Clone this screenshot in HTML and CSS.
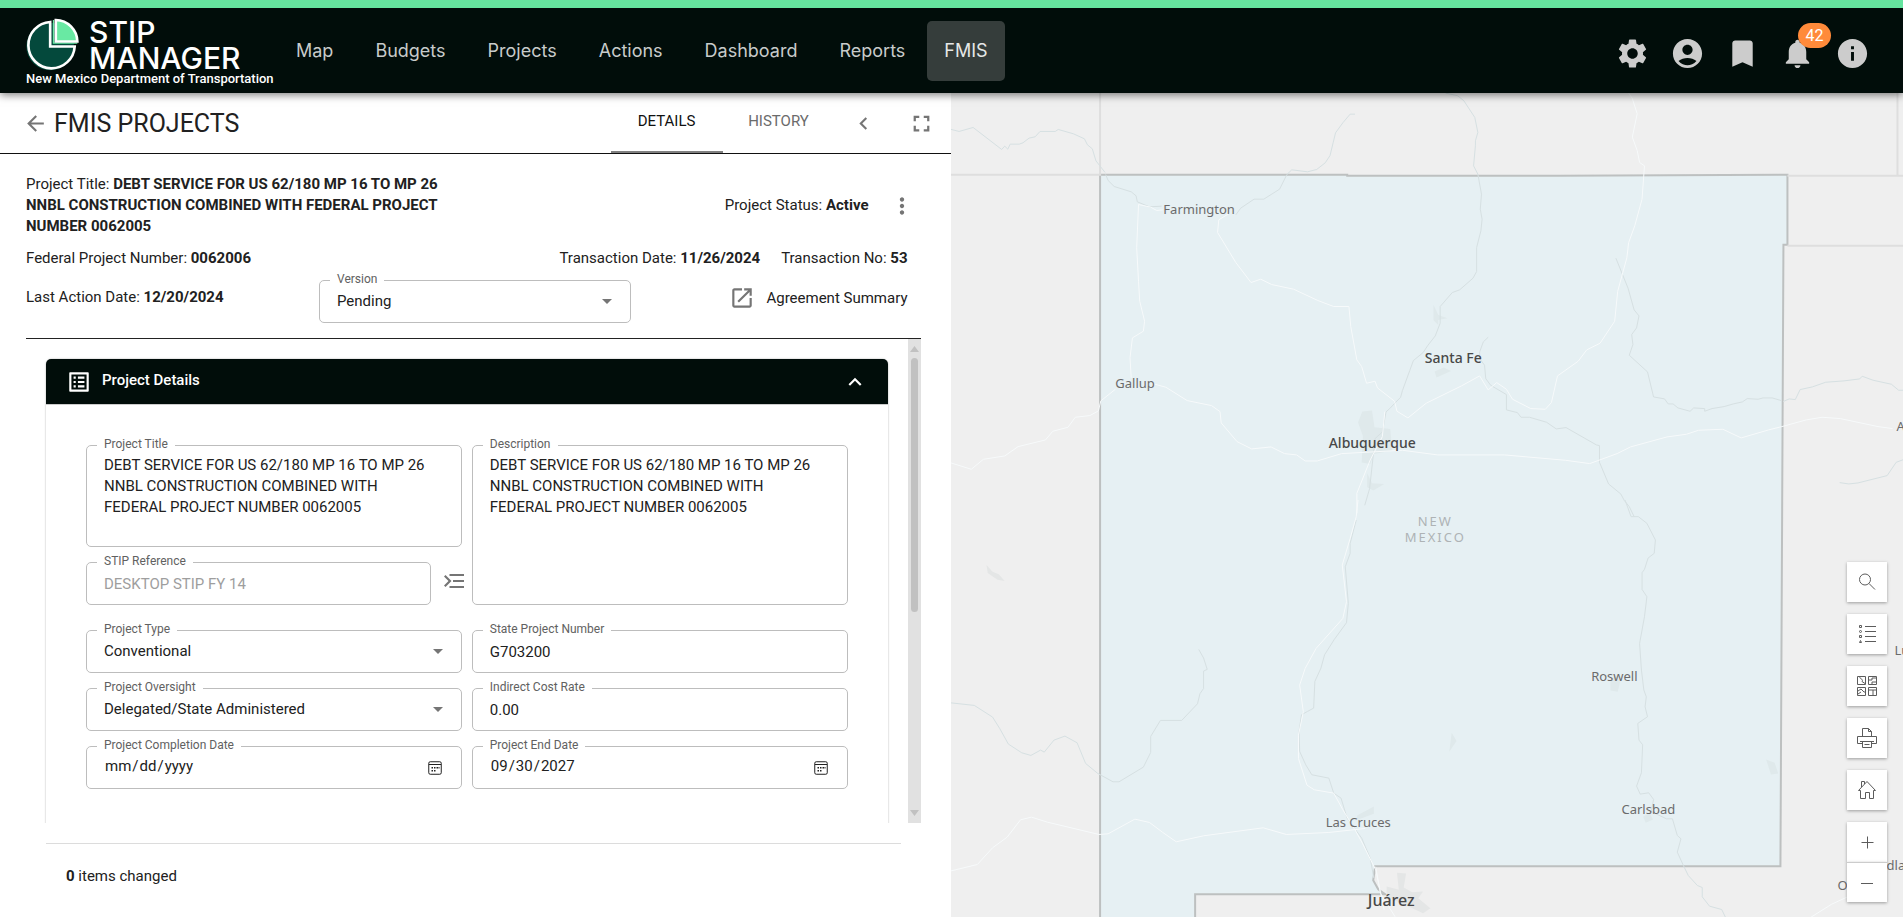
FILE: index.html
```html
<!DOCTYPE html>
<html lang="en">
<head>
<meta charset="utf-8">
<title>STIP Manager - FMIS Projects</title>
<link rel="stylesheet" href="styles.css">
</head>
<body>
<div class="app">
  <header class="topbar">
    <a class="brand" href="#">
      <span class="brand-main">
        <svg class="brand-logo" viewBox="77 54 160 160" aria-hidden="true">
          <circle cx="150" cy="140" r="72" fill="#04493c"/>
          <path d="M150 66A70 70 0 1 0 224 140H150Z" fill="#04493c" stroke="#fff" stroke-width="8"/>
          <path d="M160 60V130H232" fill="none" stroke="#69e9a3" stroke-width="4"/>
          <path d="M167 60V125H232A66 66 0 0 0 167 60Z" fill="#69e9a3" stroke="#fff" stroke-width="8"/>
        </svg>
        <span class="brand-name">STIP<br>MANAGER</span>
      </span>
      <span class="brand-sub">New Mexico Department of Transportation</span>
    </a>
    <nav class="nav">
      <a class="nav-link" href="#">Map</a>
      <a class="nav-link" href="#">Budgets</a>
      <a class="nav-link" href="#">Projects</a>
      <a class="nav-link" href="#">Actions</a>
      <a class="nav-link" href="#">Dashboard</a>
      <a class="nav-link" href="#">Reports</a>
      <a class="nav-link nav-link-active" href="#">FMIS</a>
    </nav>
    <div class="tools">
      <button class="tool" aria-label="Settings"><svg viewBox="0 0 24 24"><path d="M19.14 12.94c.04-.3.06-.61.06-.94 0-.32-.02-.64-.07-.94l2.03-1.58c.18-.14.23-.41.12-.61l-1.92-3.32c-.12-.22-.37-.29-.59-.22l-2.39.96c-.5-.38-1.03-.7-1.62-.94l-.36-2.54c-.04-.24-.24-.41-.48-.41h-3.84c-.24 0-.43.17-.47.41l-.36 2.54c-.59.24-1.13.57-1.62.94l-2.39-.96c-.22-.08-.47 0-.59.22L2.74 8.87c-.12.21-.08.47.12.61l2.03 1.58c-.05.3-.09.63-.09.94s.02.64.07.94l-2.03 1.58c-.18.14-.23.41-.12.61l1.92 3.32c.12.22.37.29.59.22l2.39-.96c.5.38 1.03.7 1.62.94l.36 2.54c.05.24.24.41.48.41h3.84c.24 0 .44-.17.47-.41l.36-2.54c.59-.24 1.13-.56 1.62-.94l2.39.96c.22.08.47 0 .59-.22l1.92-3.32c.12-.22.07-.47-.12-.61l-2.01-1.58zM12 15.6c-1.98 0-3.6-1.62-3.6-3.6s1.62-3.6 3.6-3.6 3.6 1.62 3.6 3.6-1.62 3.6-3.6 3.6z"/></svg></button>
      <button class="tool" aria-label="Account"><svg viewBox="0 0 24 24"><path d="M12 2C6.48 2 2 6.48 2 12s4.48 10 10 10 10-4.480 10-10S17.520 2 12 2zm0 4c1.930 0 3.500 1.570 3.500 3.500S13.930 13 12 13s-3.500-1.570-3.500-3.500S10.070 6 12 6zm0 14c-2.030 0-4.430-.82-6.140-2.880C7.550 15.800 9.680 15 12 15s4.450.8 6.140 2.120C16.430 19.180 14.030 20 12 20z"/></svg></button>
      <button class="tool" aria-label="Bookmarks"><svg viewBox="0 0 24 24"><path d="M17 3H7c-1.100 0-1.990.9-1.990 2L5 21l7-3 7 3V5c0-1.100-.9-2-2-2z"/></svg></button>
      <button class="tool" aria-label="Notifications"><svg viewBox="0 0 24 24"><path d="M12 22c1.100 0 2-.9 2-2h-4c0 1.100.89 2 2 2zm6-6v-5c0-3.070-1.640-5.640-4.500-6.320V4c0-.83-.67-1.500-1.500-1.500s-1.500.67-1.500 1.500v.68C7.630 5.360 6 7.920 6 11v5l-2 2v1h16v-1l-2-2z"/></svg><span class="badge">42</span></button>
      <button class="tool" aria-label="Information"><svg viewBox="0 0 24 24"><path d="M12 2C6.480 2 2 6.480 2 12s4.480 10 10 10 10-4.480 10-10S17.520 2 12 2zm1 15h-2v-6h2v6zm0-8h-2V7h2v2z"/></svg></button>
    </div>
  </header>

  <div class="content">
    <main class="panel">
      <div class="panel-head">
        <button class="icon-btn back" aria-label="Back"><svg viewBox="0 0 24 24"><path d="M20 11H7.830l5.590-5.590L12 4l-8 8 8 8 1.410-1.410L7.830 13H20v-2z"/></svg></button>
        <h1 class="title">FMIS PROJECTS</h1>
        <div class="tabs" role="tablist">
          <button class="tab tab-active" role="tab" aria-selected="true">DETAILS</button>
          <button class="tab" role="tab" aria-selected="false">HISTORY</button>
        </div>
        <button class="icon-btn" aria-label="Collapse"><svg viewBox="0 0 24 24"><path d="M15.410 7.410L14 6l-6 6 6 6 1.410-1.410L10.830 12z"/></svg></button>
        <button class="icon-btn" aria-label="Full screen"><svg class="icon-large" viewBox="0 0 24 24"><path d="M5 5h5v2H7v3H5V5m9 0h5v5h-2V7h-3V5m3 9h2v5h-5v-2h3v-3m-7 3v2H5v-5h2v3h3z"/></svg></button>
      </div>

      <section class="summary">
        <div class="summary-row">
          <p class="project-title">Project Title: <b>DEBT SERVICE FOR US 62/180 MP 16 TO MP 26 NNBL CONSTRUCTION COMBINED WITH FEDERAL PROJECT NUMBER 0062005</b></p>
          <div class="status">
            <p>Project Status: <b>Active</b></p>
            <button class="more" aria-label="More actions"><svg viewBox="0 0 24 24"><path d="M12 8c1.100 0 2-.9 2-2s-.9-2-2-2-2 .9-2 2 .9 2 2 2zm0 2c-1.100 0-2 .9-2 2s.9 2 2 2 2-.9 2-2-.9-2-2-2zm0 6c-1.100 0-2 .9-2 2s.9 2 2 2 2-.9 2-2-.9-2-2-2z"/></svg></button>
          </div>
        </div>
        <div class="summary-row">
          <p>Federal Project Number: <b>0062006</b></p>
          <div class="transactions">
            <p>Transaction Date: <b>11/26/2024</b></p>
            <p>Transaction No: <b>53</b></p>
          </div>
        </div>
        <div class="summary-row summary-last">
          <p class="last-action">Last Action Date: <b>12/20/2024</b></p>
          <div class="field version">
            <label for="version">Version</label>
            <select id="version"><option>Pending</option></select>
            <svg class="caret" viewBox="0 0 10 5"><path d="M0 0h10L5 5z"/></svg>
          </div>
          <a class="agreement" href="#"><svg viewBox="0 0 24 24"><path d="M19 19H5V5h7V3H5c-1.110 0-2 .9-2 2v14c0 1.100.89 2 2 2h14c1.100 0 2-.9 2-2v-7h-2v7zM14 3v2h3.590l-9.830 9.830 1.410 1.410L19 6.410V10h2V3h-7z"/></svg>Agreement Summary</a>
        </div>
      </section>

      <div class="scroll-area">
        <section class="card">
          <button class="card-head" aria-expanded="true">
            <svg class="card-icon" viewBox="0 0 24 24"><path d="M19 5v14H5V5h14m1.100-2H3.900c-.5 0-.9.400-.9.900v16.200c0 .4.400.9.900.9h16.200c.4 0 .9-.5.900-.9V3.900c0-.5-.5-.9-.9-.9zM11 7h6v2h-6V7zm0 4h6v2h-6v-2zm0 4h6v2h-6zM7 7h2v2H7zm0 4h2v2H7zm0 4h2v2H7z"/></svg>
            <span>Project Details</span>
            <svg class="card-chevron" viewBox="0 0 24 24"><path d="M12 8l-6 6 1.410 1.410L12 10.830l4.590 4.580L18 14z"/></svg>
          </button>
          <form class="form">
            <div class="form-top">
              <div class="form-stack">
                <div class="field field-tall">
                  <label for="ptitle">Project Title</label>
                  <textarea id="ptitle">DEBT SERVICE FOR US 62/180 MP 16 TO MP 26 NNBL CONSTRUCTION COMBINED WITH FEDERAL PROJECT NUMBER 0062005</textarea>
                </div>
                <div class="stip-row">
                  <div class="field">
                    <label for="stip">STIP Reference</label>
                    <input id="stip" type="text" value="DESKTOP STIP FY 14" disabled>
                  </div>
                  <button class="stip-btn" type="button" aria-label="Choose STIP reference"><svg viewBox="0 0 20 14"><path d="M0 2.500 1.500 1l6 6-6 6L0 11.500 4.500 7zM5.500 0H20v2H5.500zM9 6h11v2H9zM5.500 12H20v2H5.500z"/></svg></button>
                </div>
              </div>
              <div class="field field-fill">
                <label for="desc">Description</label>
                <textarea id="desc">DEBT SERVICE FOR US 62/180 MP 16 TO MP 26 NNBL CONSTRUCTION COMBINED WITH FEDERAL PROJECT NUMBER 0062005</textarea>
              </div>
            </div>
            <div class="form-grid">
              <div class="field">
                <label for="ptype">Project Type</label>
                <select id="ptype"><option>Conventional</option></select>
                <svg class="caret" viewBox="0 0 10 5"><path d="M0 0h10L5 5z"/></svg>
              </div>
              <div class="field">
                <label for="spn">State Project Number</label>
                <input id="spn" type="text" value="G703200">
              </div>
              <div class="field">
                <label for="oversight">Project Oversight</label>
                <select id="oversight"><option>Delegated/State Administered</option></select>
                <svg class="caret" viewBox="0 0 10 5"><path d="M0 0h10L5 5z"/></svg>
              </div>
              <div class="field">
                <label for="icr">Indirect Cost Rate</label>
                <input id="icr" type="text" value="0.00">
              </div>
              <div class="field">
                <label for="pcd">Project Completion Date</label>
                <input id="pcd" type="date">
                <svg class="calendar" viewBox="0 0 14 14"><rect x=".75" y=".75" width="12.500" height="12.500" rx="1.500"/><path d="M1 3.500h12"/><path class="dots" d="M6 6h1.500v1.500H6zM8.500 6H10v1.500H8.500zM3.500 6H5v1.500H3.500zM3.500 9H5v1.500H3.500zM6 9h1.500v1.500H6zM10.500 6h1v1.500h-1z"/></svg>
              </div>
              <div class="field">
                <label for="ped">Project End Date</label>
                <input id="ped" type="date" value="2027-09-30">
                <svg class="calendar" viewBox="0 0 14 14"><rect x=".75" y=".75" width="12.500" height="12.500" rx="1.500"/><path d="M1 3.500h12"/><path class="dots" d="M6 6h1.500v1.500H6zM8.500 6H10v1.500H8.500zM3.500 6H5v1.500H3.500zM3.500 9H5v1.500H3.500zM6 9h1.500v1.500H6zM10.500 6h1v1.500h-1z"/></svg>
              </div>
            </div>
          </form>
        </section>
        <div class="scrollbar" aria-hidden="true">
          <svg viewBox="0 0 9 6"><path d="M4.500 0 9 6H0z"/></svg>
          <div class="scroll-track"><div class="scroll-thumb"></div></div>
          <svg viewBox="0 0 9 6"><path d="M0 0h9L4.500 6z"/></svg>
        </div>
      </div>

      <footer class="panel-foot"><b>0</b> items changed</footer>
    </main>

    <section class="map" aria-label="Map">
      <svg class="map-canvas" viewBox="951 93 952 824" preserveAspectRatio="xMidYMid slice">
        <path class="state" d="M1100 175H1347V176H1558L1787 175V245H1783L1780 866H1375L1373 880 1378 889 1385 894H1195V925H1100Z"/>
        <path class="outer" d="M951 175H1100V93M1787 176H1903M1787 246H1903M1897 93V175"/>
        <g transform="translate(950 90) scale(.6078 .3333)">
          <path class="urban" d="M678 965l16-3 4 50 26 5 3 65-30 10-6 30-14-4 2-80-8-40zM686 1150l8 30 20 2-18 20-10-10zM797 845l15-12 12 10-24 20zM795 645l8 30 15 10-15 5v15l-8-15z"/>
          <path class="river" d="M0 118l15 7 23-12 47 66 5-10 5 9 4-15h15l6-4 10-14 10-4 8-16h25l5-6 25 13 18 15 5 18 8 12 6 36 15 35M256 254l4 18 10 18 28 16 8 12 2 18 20 15 20-2M470 375l8-20 22-27h16l26-30 12-44 8-14 26 6 15-7 14-20 8-22 5-38 4-30 12-30 12-26h8M815 10l20 8 10 15 18 50 5 45-4 25v15l-3 60 7 25 6 60-2 45 3 30-2 35-7 50v72l-6 20-22 35-12 8-20 42v50l-8 38-12 28-8 22-16 24-6 30-12 60-3 20-18 34-6 10-6 60-12 20-3 50-6 100-8 50M1095 505l20 90 10 65 8 18-4 36-8 20 2 30-6 32 30 50 10 75 18 6 6 15h8l8 12 20 10 6-10 18 2v8l12-8 20-6 15-8 15-6 8-10 18 2 8-4h15l15 8M1370 935l10-8 10 2 8-30 20-8 22-14 30-4 26-6 4-8 18 12 30 12 12 18h14M885 742l-8 14-6 30v20l8 20 2 40 8 20 26 28v46l18 8 6 14h14l28 15 16 20 16-4 50 52 5 2v50l15 65 20 30 6 20 8 18 8 30M1463 1178l15 4 15-3 48-22 15-40 12-8"/>
          <path class="road" d="M0 1118l35 20 20-30 35-10 22-28 45-20 12-26 25-12 12-30 24-5 14-14 4-30 24-35M335 882l20 10 35 40 40 15 14 18 2 34 26 56 24 22 32-6 22 20 20 4 14 18h20l40-22 100-10 58 14h110l100 16 40 10 45-30 22-20 60-30 32-8 20-12 40-3 30 26 45-24 22-10 40-20 26-8 30 4 62 24 24 6M350 360l-10 2-10-10-20-8-3 130 3 100 2 60 8 60-2 30-18 20-4 60 2 60M460 370l-18 20-2 38 30 90 25 60 16-10 18 16 36 14 40 34 26 18h25l3 60 10 100 8 20 8 50 14-6 4 20 28 40 4 30 18 20 30-44 58-52 30-30 14 42 14-22 16 20 10 30 30 28 24 2 10-20 10-80 34-44 14-34 22-20 24-66 5-90 15-100 3-46 10-50 12-80 4-100-8-10-4-36-8-40 8-70-8-46-26-70-6-30M715 965l-4 75-20 70-22 100v60"/>
        </g>
        <g transform="translate(950 500) scale(.6078 .3333)">
          <path class="urban urban-out" d="M60 195l10 20 10 8 10 20-12-4-16-20zM735 1118l15 2-4 42 14 14 18-2-8 20 20 30-12 15-60-50v-30l20 10z"/>
          <path class="urban" d="M825 698l8 25-12 32zM1086 545l8-20 8 20-4 30-12-4zM1342 778l14 10 6 32-12 3zM670 945l27-26v22l-30 20zM1140 950l10-12 6 20-12 10z"/>
          <path class="river" d="M0 608l40 8 30 35 12 35 14 46 22 26 15 8 16-16 6 6 16-36 18-12 20 20 14 62 20 30 25 25h10l40-44 12-44v-48l16-48h35l26-50 4-30 6-16v-52l6-5-6-34-8-26M668 60l-10 70v30l-8 40 5 110-3 58-20 50-16 46-6 40-10 40-2 80-10 10-10 10-4 50 1 60 10 40 10 30 28 10 8 45 12 15 10 60 24 60 14 60 6 60M1110 0l10 50h12l14 20 14 50-2 40-10 14-6 34-4 10v50l8 22-4 60-8 80 3 80 4 60 4 20-2 30 4 30-16 20 2 50 6 14-2 84-8 40 6 24 14-4 8 20-4 36 25 22h10l8 50 6 10-6 40 10 40 8 30 15 30 8 6v28l12 28 20 10 8 30 12 20"/>
          <path class="road" d="M671 0l-3 50-10 65-13 80 7 110-6 50-44 90-18 60-9 50 6 80-8 70v70l14 80 12 14 32 10 15 50 20 60 12 40 22 80 14 120M0 1113l45-20 25-50 24-32 22-52 18-8 26 15 85 37 15-2 44-44 24 10 22 30 22 28 45-18 98-24 38 20 70-6 60-12M700 1100l8 80 24 70M1415 1252l35-40 26-22"/>
        </g>
        <text class="town" x="1199" y="214">Farmington</text>
        <text class="town" x="1135" y="388">Gallup</text>
        <text class="city" x="1453" y="363">Santa Fe</text>
        <text class="city" x="1372" y="448">Albuquerque</text>
        <text class="region" x="1435" y="526">NEW</text>
        <text class="region" x="1435" y="542">MEXICO</text>
        <text class="town" x="1614" y="681">Roswell</text>
        <text class="town" x="1648" y="814">Carlsbad</text>
        <text class="town" x="1358" y="827">Las Cruces</text>
        <text class="city city-large" x="1391" y="906">Juárez</text>
        <text class="town edge" x="1896" y="431">Amarillo</text>
        <text class="town edge" x="1894" y="655">Lubbock</text>
        <text class="town edge" x="1871" y="870">Midland</text>
        <text class="town edge" x="1837" y="890">Odessa</text>
      </svg>
      <div class="map-tools">
        <button class="map-btn" aria-label="Search"><svg viewBox="0 0 20 20"><circle cx="8" cy="7.500" r="5.500"/><path d="M12 11.500l6 6"/></svg></button>
        <button class="map-btn" aria-label="Legend"><svg viewBox="0 0 20 20"><path d="M8 2.500h11M8 7.500h11M8 12.500h11M8 17.500h11M2.500 1.500h2v2h-2zM2.500 11.500h2v2h-2zM3.500 16.500l1 2h-2z"/><circle cx="3.500" cy="7.500" r="1"/></svg></button>
        <button class="map-btn" aria-label="Basemap gallery"><svg viewBox="0 0 20 20"><path d="M.5.500h8v8h-8zM11.500.500h8v8h-8zM.5 11.500h8v8h-8zM11.500 11.500h8v8h-8zM3 .5c-1 3 4 2 2 5l3 2M12 4h3V2h4M15 8V6h4M1 15l3-2 3 3 2 0M1 18l3-2M12 14h7M16 14v5"/></svg></button>
        <button class="map-btn" aria-label="Print"><svg viewBox="0 0 20 20"><path d="M5.500 8.500v-8h6l3 3v5M11.500.500v3h3M5.500 15.500h-5v-7h19v7h-5M3 13.500h14M5.500 13.500v6h9v-6M7.500 16.500h5"/></svg></button>
        <button class="map-btn" aria-label="Default view"><svg viewBox="0 0 20 20"><path d="M1.500 10.500L10 1.500l8.500 9h-2v8h-4v-6h-4v6h-5v-8zM4.500 7V1.500h3V4"/></svg></button>
        <div class="zoom-group">
          <button class="map-btn" aria-label="Zoom in"><svg viewBox="0 0 20 20"><path d="M4.500 10.500h12M10.500 4.500v12"/></svg></button>
          <button class="map-btn" aria-label="Zoom out"><svg viewBox="0 0 20 20"><path d="M4 10.500h12"/></svg></button>
        </div>
      </div>
    </section>
  </div>
</div>
</body>
</html>
```

FILE: styles.css
```css
* { box-sizing: border-box; }

body {
  margin: 0;
  font-family: Roboto, "Liberation Sans", sans-serif;
  font-size: 15px;
  line-height: 21px;
  color: #212121;
  background: #fff;
}

button, input, select, textarea { font: inherit; color: inherit; }
button { padding: 0; border: 0; background: none; cursor: pointer; }
a { color: inherit; text-decoration: none; }
p, h1 { margin: 0; }
b { font-weight: 700; }
svg { display: block; }

.app { display: flex; flex-direction: column; height: 100vh; }

/* Top bar */
.topbar {
  position: relative;
  z-index: 2;
  display: flex;
  align-items: center;
  padding: 0 23px 0 26px;
  height: 93px;
  flex: none;
  border-top: 8px solid #65e49f;
  background: #010d0a;
  box-shadow: 0 2px 8px rgba(0, 0, 0, .5);
  color: #fff;
}
.brand { display: flex; flex-direction: column; width: 250px; padding-top: 4px; }
.brand-main { display: flex; gap: 10px; }
.brand-logo { width: 53px; height: 53px; }
.brand-name { padding-top: 1px; font: 500 30px/26px Inter, sans-serif; }
.brand-sub { font-size: 13px; line-height: 16px; font-weight: 500; white-space: nowrap; }
.nav { display: flex; gap: 2px; }
.nav-link {
  display: flex;
  align-items: center;
  height: 60px;
  padding: 0 20px;
  border-radius: 5px;
  font: 400 18px/24px Inter, sans-serif;
  color: #c8cbca;
}
.nav-link-active { padding: 0 17px; background: #353d3b; color: #e6e8e7; }
.tools { display: flex; margin-left: auto; padding-top: 5px; }
.tool { position: relative; display: grid; place-items: center; width: 55px; height: 55px; }
.tool svg { width: 35px; height: 35px; fill: #ccc; }
.badge {
  position: absolute;
  top: -3px;
  left: 28px;
  min-width: 33px;
  border-radius: 13px;
  background: #ff8a3a;
  color: #fff;
  font-size: 16px;
  line-height: 25px;
}

/* Page */
.content { display: flex; flex: 1; min-height: 0; }
.panel { display: flex; flex-direction: column; flex: 0 0 calc(50% - 1px); min-width: 0; }
.panel-head {
  display: flex;
  align-items: center;
  height: 61px;
  flex: none;
  padding: 0 0 0 23px;
  border-bottom: 1px solid #111;
}
.icon-btn { display: grid; place-items: center; width: 58px; height: 58px; }
.icon-btn svg { width: 25px; height: 25px; fill: #757575; }
.icon-btn .icon-large { width: 27px; height: 27px; }
.back { width: 25px; }
.title { margin-left: 6px; padding-top: 2px; font-size: 25px; line-height: 30px; font-weight: 400; }
.tabs { display: flex; margin-left: auto; align-self: stretch; }
.tab { width: 112px; padding-bottom: 2px; border-bottom: 2px solid transparent; color: #6b6b6b; }
.tab-active { border-bottom-color: #808080; color: #111; }

/* Project summary */
.summary {
  display: flex;
  flex-direction: column;
  margin: 0 30px 0 26px;
  padding: 20px 13px 15px 0;
  border-bottom: 1px solid #222;
}
.summary-row { display: flex; align-items: center; justify-content: space-between; gap: 16px; }
.project-title { width: 48%; }
.status { display: flex; align-items: center; gap: 20px; }
.more svg { width: 26px; height: 26px; margin-right: -7px; fill: #757575; }
.transactions { display: flex; gap: 21px; }
.summary-row + .summary-row { margin-top: 11px; }
.summary-row.summary-last { align-items: flex-start; }
.last-action { flex: none; width: 277px; padding-top: 7px; }
.version { flex: none; width: 312px; }
.version select { padding-bottom: 2px; }
.agreement { display: flex; align-items: center; gap: 11px; margin-left: auto; padding-top: 5px; }
.agreement svg { width: 26px; height: 26px; fill: #757575; }

/* Outlined fields */
.field {
  position: relative;
  display: flex;
  align-items: center;
  height: 43px;
  border: 1px solid #bdbdbd;
  border-radius: 5px;
  background: #fff;
}
.field label {
  position: absolute;
  top: -10px;
  left: 10px;
  padding: 0 7px;
  background: #fff;
  color: #616161;
  font-size: 12px;
  line-height: 16px;
}
.field input, .field select, .field textarea {
  flex: 1;
  min-width: 0;
  height: 100%;
  margin: 0;
  padding: 0 17px;
  border: 0;
  outline: 0;
  background: none;
  appearance: none;
}
.field input:disabled { color: #9e9e9e; }
.field textarea { padding: 9px 20px 0 17px; resize: none; overflow: hidden; }
.field input[type="date"] { padding-bottom: 3px; }
.field input[type="date"]::-webkit-calendar-picker-indicator { opacity: 0; }
.calendar {
  position: absolute;
  right: 19px;
  top: 14px;
  width: 14px;
  height: 14px;
  fill: none;
  stroke: #212121;
  stroke-width: 1;
  pointer-events: none;
}
.calendar .dots { fill: #212121; stroke: none; }
.caret { width: 10px; height: 5px; margin-right: 18px; fill: #757575; }
.field-tall { height: 102px; }
.field-fill { height: auto; }

/* Scrolling card */
.scroll-area { display: flex; flex: 1; min-height: 0; margin: 0 30px 0 26px; overflow: hidden; }
.card {
  flex: 1;
  align-self: flex-start;
  min-width: 0;
  height: 600px;
  margin: 20px 20px 0;
  border-radius: 6px;
  box-shadow: 0 0 2px rgba(0, 0, 0, .35);
}
.card-head {
  display: flex;
  align-items: center;
  width: 100%;
  height: 45px;
  padding: 0 20px;
  border-radius: 5px 5px 0 0;
  background: #010d0a;
  color: #fff;
  font-weight: 500;
}
.card-head span { padding-bottom: 2px; }
.card-icon, .card-chevron { width: 26px; height: 26px; fill: #fff; }
.card-icon { margin-right: 10px; }
.card-chevron { margin-left: auto; }
.form { padding: 40px; border-top: 1px solid #ccc; }
.form-top, .form-grid { display: grid; grid-template-columns: 1fr 1fr; gap: 15px 10px; }
.form-grid { margin-top: 25px; }
.form-stack { display: flex; flex-direction: column; gap: 15px; }
.stip-row { display: flex; gap: 13px; margin-right: -2px; }
.stip-row .field { flex: 1; }
.stip-btn svg { width: 20px; height: 14px; margin-top: -5px; fill: #757575; }

.scrollbar {
  display: flex;
  flex-direction: column;
  align-items: center;
  gap: 6px;
  width: 13px;
  padding: 7px 0;
  background: #e1e1e1;
}
.scrollbar svg { width: 9px; height: 6px; fill: #c1c1c1; }
.scroll-track { flex: 1; width: 7px; }
.scroll-thumb { height: 57%; border-radius: 4px; background: #c1c1c1; }

.panel-foot {
  margin: 20px 50px 0 46px;
  padding: 22px 20px 30px;
  border-top: 1px solid #dcdcdc;
}

/* Map */
.map { position: relative; flex: 1 1 0; min-width: 0; overflow: hidden; background: #efefef; }
.map-canvas { width: 100%; height: 100%; font-family: "Noto Sans", sans-serif; }
.map-canvas path { fill: none; stroke-width: 1; vector-effect: non-scaling-stroke; }
.map-canvas .state { fill: #e6f0f3; stroke: #bdc0c0; stroke-width: 2; }
.map-canvas .outer { stroke: #dedede; stroke-width: 2; }
.map-canvas .river { stroke: #d6e0e2; }
.map-canvas .road { stroke: #f7fafb; }
.map-canvas .urban { fill: #dfe9eb; }
.map-canvas .urban-out { fill: #e4e6e6; }
.map-canvas text { text-anchor: middle; }
.town { font-size: 13px; fill: #6b6b6b; }
.city { font-size: 14px; font-weight: 500; fill: #484848; }
.city-large { font-size: 16px; }
.region { font-size: 13px; fill: #aeb3b5; letter-spacing: 2px; }
.map-canvas .edge { text-anchor: start; }
.map-tools {
  position: absolute;
  right: 16px;
  bottom: 15px;
  display: flex;
  flex-direction: column;
  gap: 12px;
}
.map-btn {
  display: grid;
  place-items: center;
  width: 40px;
  height: 40px;
  background: #fff;
  box-shadow: 0 1px 3px rgba(0, 0, 0, .35);
}
.map-btn svg { width: 20px; height: 20px; fill: none; stroke: #5c5c5c; stroke-width: 1; }
.zoom-group .map-btn + .map-btn { border-top: 1px solid #ccc; }
```
